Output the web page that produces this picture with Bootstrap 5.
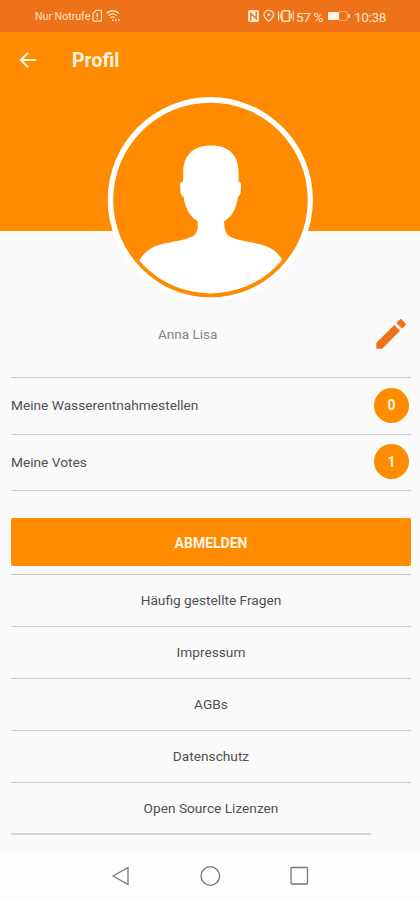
<!DOCTYPE html>
<html lang="de">
<head>
<meta charset="utf-8">
<meta name="viewport" content="width=device-width, initial-scale=1">
<title>Profil</title>
<link href="https://cdn.jsdelivr.net/npm/bootstrap@5.3.0/dist/css/bootstrap.min.css" rel="stylesheet">
<style>
body{font-family:Roboto,"Liberation Sans",sans-serif;background:#fafafa;color:#505050;font-size:13.7px;line-height:20px;overflow:hidden}
svg{display:block;flex:none}
.screen{height:900px}
.status{height:32px;background:#ee7318;color:#ffe5cb;padding:0 34px 0 35px}
.status .carrier{font-size:10.6px;margin-right:2px;padding-top:1px}
.status .info{font-size:13.4px;letter-spacing:-.25px}
.status .charge{font-size:13.5px;letter-spacing:-.35px;padding-top:1px}
.hero{height:199px;background:#ff8c00}
.hero .topbar{height:56px;padding-left:18px;color:#fff3e2}
.hero h1{font-size:19.5px;font-weight:700;margin:2px 0 0 35px;line-height:24px}
.hero .avatar{margin:8px 0 0 107px}
.namebar{height:146px;padding:0 13px 27px 0}
.namebar .who{color:#858585;padding:0 0 6px 158px;font-size:13.5px}
.lined{margin:0 9px 0 11px;border-color:#cbcbcb}
.counts{border-top:1px solid #cbcbcb}
.counts .list-group-item{height:56.5px;padding:0 2px 1px 0;background:none;border:0;border-bottom:1px solid #cbcbcb!important;color:#505050}
.counter{width:35px;height:35px;background:#ff8c00;color:#fff3e2;font-size:14px;font-weight:700}
.logout{height:48px;margin:27px 9px 8px 11px;background:#ff8c00!important;color:#fff3e2!important;border:0;border-radius:2px;font-size:14px;font-weight:700;padding:2px 0 0}
.links{border-top:1px solid #c8c8c8}
.links .list-group-item{height:51.9px;padding:0;background:none;border:0;border-bottom:1px solid #cbcbcb;color:#505050}
.links .list-group-item:last-child{border-bottom:0;height:50.7px;padding:0}
.endline{height:1.5px;width:360px;background:#d6d6d6;margin-left:11px}
.sysnav{height:48px;background:#fdfdfd;padding-left:110px}
</style>
</head>
<body>
<main class="screen d-flex flex-column">
  <div class="status d-flex align-items-center justify-content-between">
    <div class="d-flex align-items-center">
      <span class="carrier">Nur Notrufe</span>
      <svg width="29" height="14" viewBox="0 0 29 14" fill="none" stroke="#ffe5cb" stroke-width="1.2"><path d="M4 1.4h4.5q1 0 1 1v8.700q0 1-1 1H2q-1 0-1-1V4.500zM5.300 4v4M5.300 9.200v1.300"/><path d="M14.500 4.200q6-5 12.500 0M16.500 6.500q4-3.300 8.500 0M18.600 8.700q2-1.700 4.200 0" stroke-width="1.400"/><path d="M20 11.200h1.500M23 11.200h1.600M26 11.200h1.600" stroke-width="1.600"/></svg>
    </div>
    <div class="info d-flex align-items-center">
      <svg width="49" height="14" viewBox="0 0 49 14" fill="none" stroke="#ffe5cb" stroke-width="1.3"><path d="M3 1h7q2 0 2 2v8q0 2-2 2H3q-2 0-2-2V3q0-2 2-2z" fill="#ffe5cb" stroke="none"/><path d="M3.800 11.500V4.500l5.400 5V2.500" stroke="#ee7318"/><path d="M21.800 12.200Q17 8 17 5.700a4.800 4.300 0 0 1 9.600 0Q26.600 8 21.800 12.200z"/><circle cx="21.800" cy="5.800" r="1.300" fill="#ffe5cb" stroke="none"/><rect x="35" y="1.700" width="7.600" height="10.600" rx="1.500" stroke-width="1.600"/><path d="M31.500 2.500v9M33.300 4.500v5M46.200 2.500v9M44.400 4.500v5" stroke-width="1"/></svg>
      <span class="charge">57 %</span>
      <svg class="mx-1" width="23" height="12" viewBox="0 0 23 12"><path d="M1 2h11v8H1z" fill="#fff3e2"/><path d="M12 1.500h7q1 0 1 1v7q0 1-1 1h-7" fill="none" stroke="#f9b27b"/><path d="M21 4h1.700v4H21z" fill="#ffe5cb"/></svg>
      <span class="charge">10:38</span>
    </div>
  </div>
  <header class="hero">
    <div class="topbar d-flex align-items-center">
      <svg width="19" height="18" viewBox="0 0 19 18" fill="none" stroke="#fff3e2" stroke-width="2"><path d="M18 9H3M10 1.800 2.800 9l7.200 7.200"/></svg>
      <h1>Profil</h1>
    </div>
    <svg class="avatar" width="207" height="207" viewBox="107 96 207 207">
      <defs><clipPath id="disc"><circle cx="210.500" cy="199.800" r="93.600"/></clipPath></defs>
      <circle cx="210.300" cy="199.700" r="102.600" fill="#fff"/>
      <circle cx="210.500" cy="200" r="97.300" fill="#ff8c00"/>
      <path clip-path="url(#disc)" fill="#fff" d="M211 145.500C193 145.500 183.500 155 183.200 172V181.500C180 181.500 180 184 180.300 189C180.500 194 181 196 183.500 196.500C185 208 190 217 197.500 221C198.500 228 197 235 192 236.500C181 242 166 242 156 246C148 249 143 254 139 261V300H283V261C279 254 274 249 266 246C256 242 240 242 229 236C225 233 224.500 228 224 221.500C232 217 236.500 208 238 196.500C240.500 195 240.800 193 241 188C241.200 184 241 182 238.500 181.500V172C238.500 155 229 145.500 211 145.500Z"/>
    </svg>
  </header>
  <section class="namebar d-flex align-items-end justify-content-between">
    <span class="who">Anna Lisa</span>
    <svg width="32" height="32" viewBox="0 0 32 32" fill="#ee7318"><path d="M1.300 24.800 19.300 7 25 12.800 7.200 30.800H1.300z"/><path d="M21.300 5.100 24.800 1.500Q25.800.600 26.800 1.500L30.500 5.200Q31.500 6.200 30.500 7.200L27 10.800z"/></svg>
  </section>
  <ul class="list-group list-group-flush counts lined rounded-0">
    <li class="list-group-item d-flex align-items-center justify-content-between">Meine Wasserentnahmestellen<span class="counter rounded-circle d-flex align-items-center justify-content-center">0</span></li>
    <li class="list-group-item d-flex align-items-center justify-content-between">Meine Votes<span class="counter rounded-circle d-flex align-items-center justify-content-center">1</span></li>
  </ul>
  <button class="btn logout" type="button">ABMELDEN</button>
  <div class="list-group list-group-flush links lined rounded-0">
    <a class="list-group-item d-flex align-items-center justify-content-center">Häufig gestellte Fragen</a>
    <a class="list-group-item d-flex align-items-center justify-content-center">Impressum</a>
    <a class="list-group-item d-flex align-items-center justify-content-center">AGBs</a>
    <a class="list-group-item d-flex align-items-center justify-content-center">Datenschutz</a>
    <a class="list-group-item d-flex align-items-center justify-content-center">Open Source Lizenzen</a>
  </div>
  <div class="endline"></div>
  <nav class="sysnav d-flex align-items-center mt-auto">
    <svg width="202" height="22" viewBox="0 0 202 22" fill="none" stroke="#777" stroke-width="1.300"><path d="M18 2.500v17L3 11z" stroke-linejoin="round"/><circle cx="100.300" cy="11" r="9.300"/><rect x="181" y="2.500" width="16.500" height="16.500" rx="1"/></svg>
  </nav>
</main>
<script src="https://cdn.jsdelivr.net/npm/bootstrap@5.3.0/dist/js/bootstrap.bundle.min.js"></script>
</body>
</html>
